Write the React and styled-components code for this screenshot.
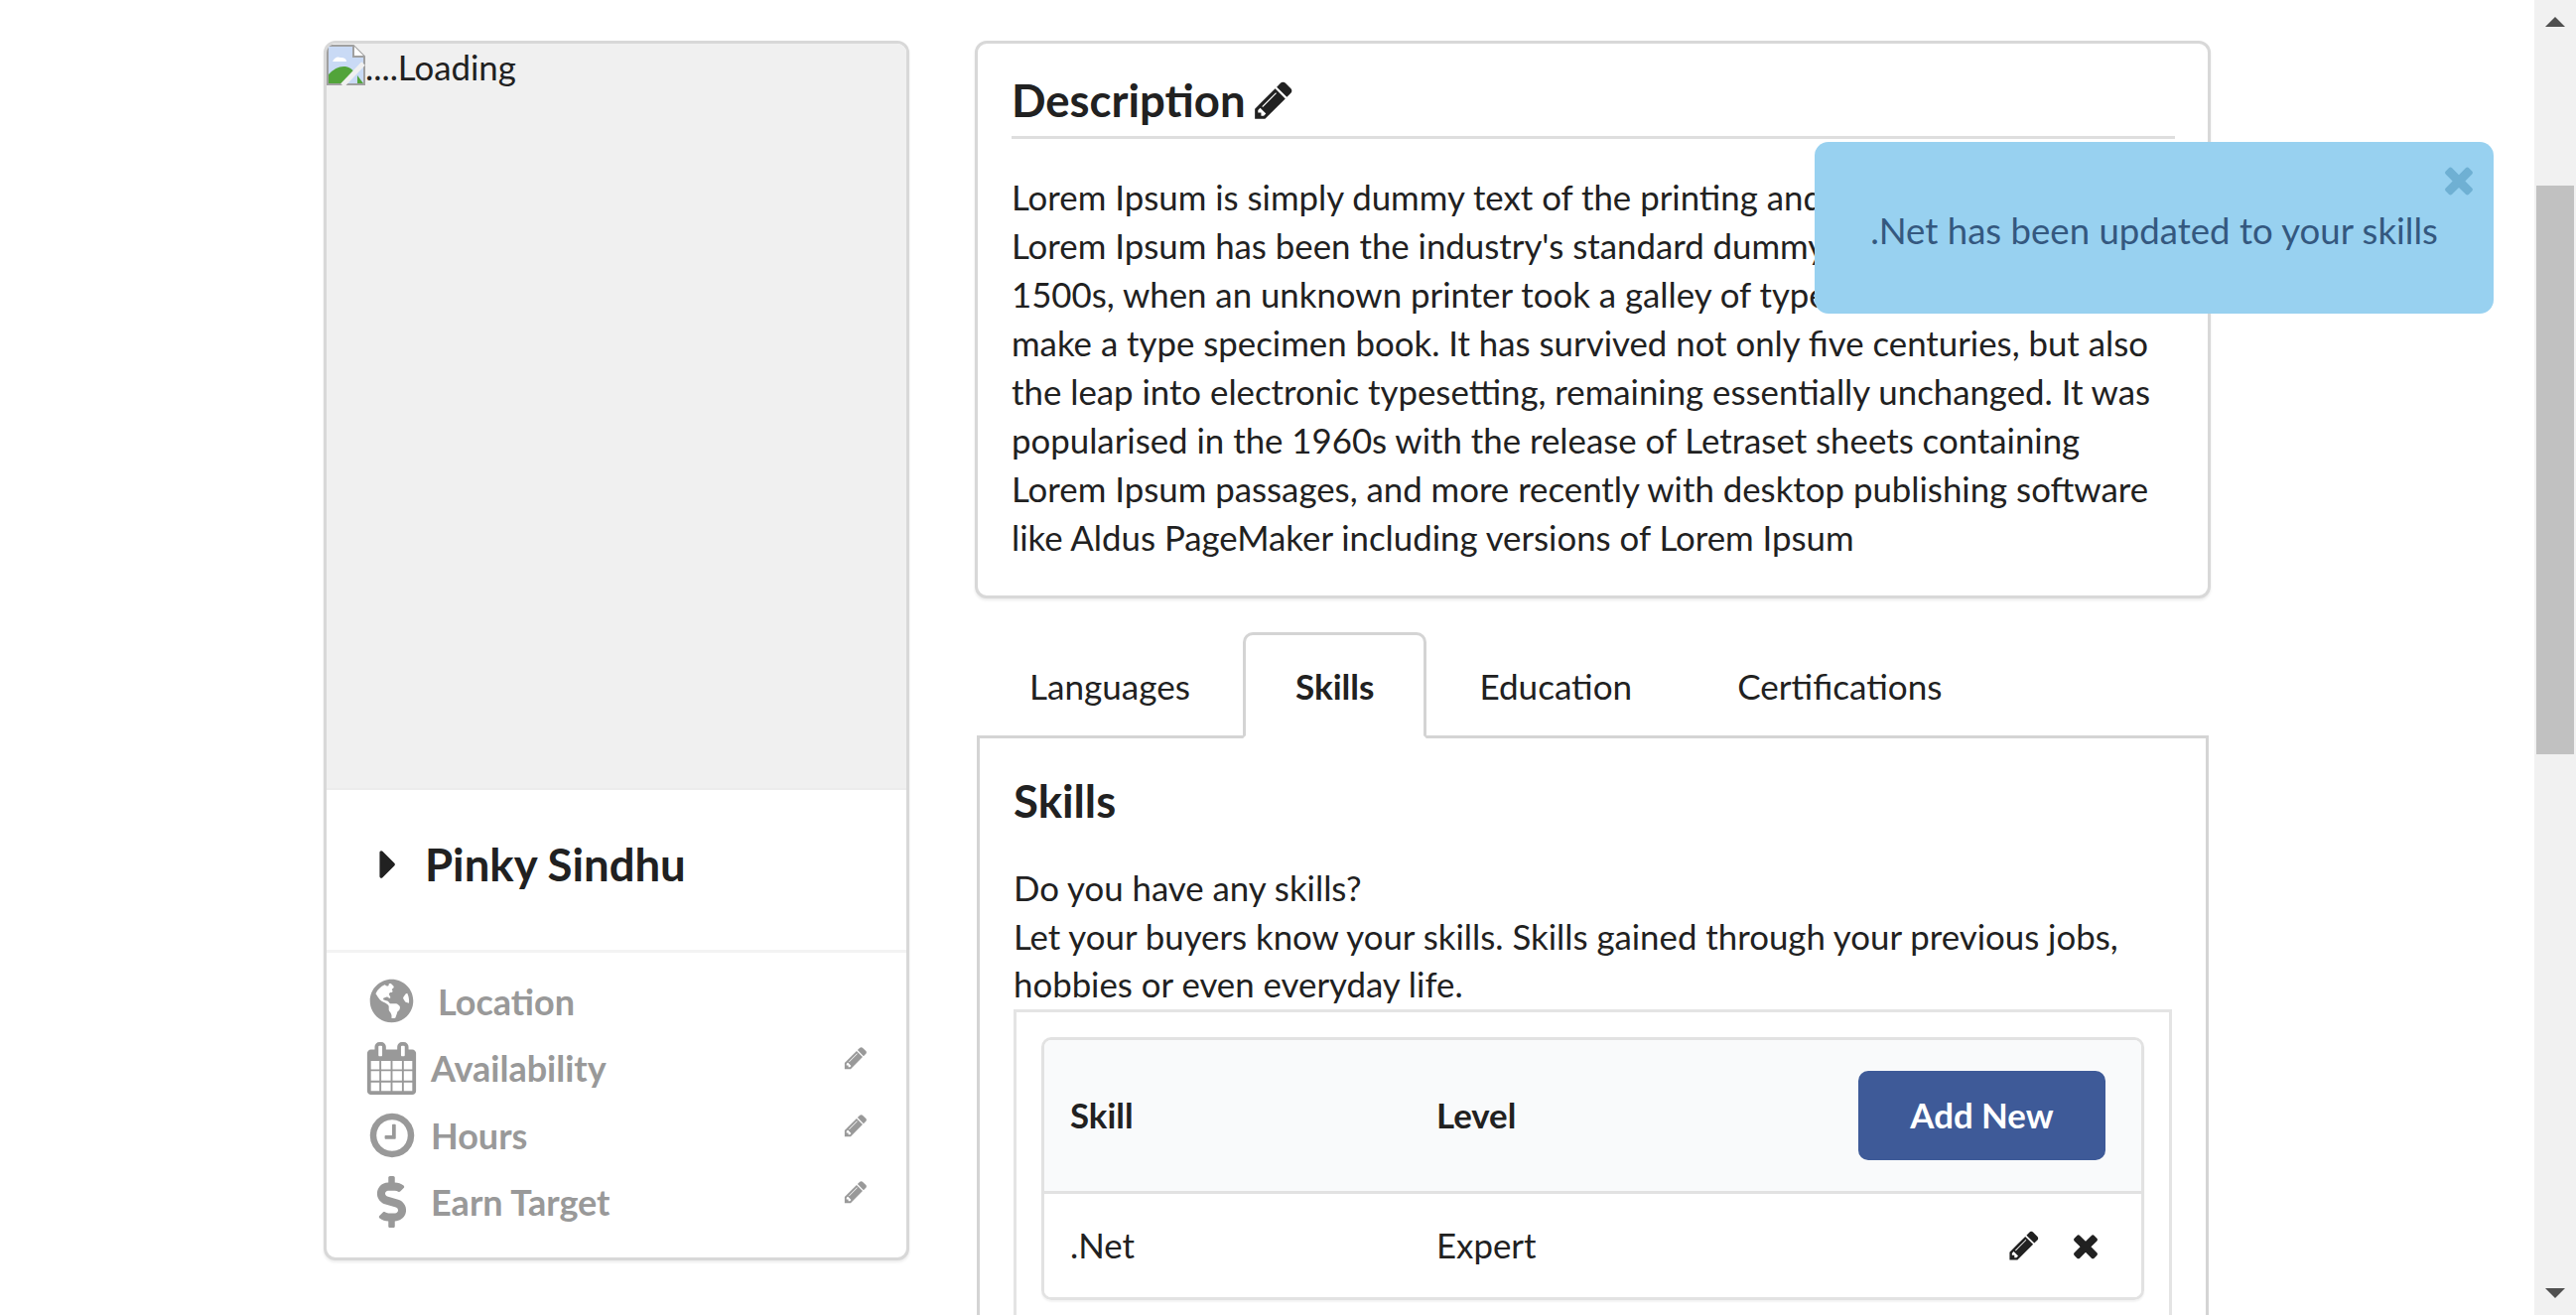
import React from 'react'
import styled, { createGlobalStyle } from 'styled-components'
import { FaGlobeAmericas, FaDollarSign } from 'react-icons/fa'

const PENCIL = 'M491 1536l91-91-235-235-91 91v107h128v128h107zm523-928q0-22-22-22-10 0-17 7l-542 542q-7 7-7 17 0 22 22 22 10 0 17-7l542-542q7-7 7-17zm-54-192l416 416-832 832h-416v-416zm683 96q0 53-37 90l-166 166-416-416 166-165q36-38 90-38 53 0 91 38l235 234q37 39 37 91z'
const TIMES = 'M1490 1322q0 40-28 68l-136 136q-28 28-68 28t-68-28l-294-294-294 294q-28 28-68 28t-68-28l-136-136q-28-28-28-68t28-68l294-294-294-294q-28-28-28-68t28-68l136-136q28-28 68-28t68 28l294 294 294-294q28-28 68-28t68 28l136 136q28 28 28 68t-28 68l-294 294 294 294q28 28 28 68z'
const CARET = 'M1152 896q0 26-19 45l-448 448q-19 19-45 19t-45-19-19-45v-896q0-26 19-45t45-19 45 19l448 448q19 19 19 45z'
const CALENDAR = 'M192 1664h288v-288h-288v288zm352 0h320v-288h-320v288zm-352-352h288v-320h-288v320zm352 0h320v-320h-320v320zm-352-384h288v-288h-288v288zm736 736h320v-288h-320v288zm-384-736h320v-288h-320v288zm768 736h288v-288h-288v288zm-384-352h320v-320h-320v320zm-352-864v-288q0-13-9.500-22.500t-22.500-9.500h-64q-13 0-22.500 9.500t-9.500 22.500v288q0 13 9.500 22.500t22.500 9.500h64q13 0 22.500-9.500t9.500-22.500zm736 864h288v-320h-288v320zm-384-384h320v-288h-320v288zm384 0h288v-288h-288v288zm32-480v-288q0-13-9.500-22.500t-22.500-9.500h-64q-13 0-22.500 9.500t-9.500 22.500v288q0 13 9.500 22.500t22.500 9.500h64q13 0 22.500-9.500t9.500-22.500zm384-64v1280q0 52-38 90t-90 38h-1408q-52 0-90-38t-38-90v-1280q0-52 38-90t90-38h128v-96q0-66 47-113t113-47h64q66 0 113 47t47 113v96h384v-96q0-66 47-113t113-47h64q66 0 113 47t47 113v96h128q52 0 90 38t38 90z'
const CLOCK = 'M1024 544v448q0 14-9 23t-23 9h-320q-14 0-23-9t-9-23v-64q0-14 9-23t23-9h224v-352q0-14 9-23t23-9h64q14 0 23 9t9 23zm416 352q0-148-73-273t-198-198-273-73-273 73-198 198-73 273 73 273 198 198 273 73 273-73 198-198 73-273zm224 0q0 209-103 385.500t-279.500 279.500-385.500 103-385.500-103-279.500-279.500-103-385.500 103-385.500 279.500-279.500 385.500-103 385.500 103 279.500 279.500 103 385.500z'

const Global = createGlobalStyle`
  html, body { margin: 0; padding: 0; height: 100%; overflow: hidden; background: #fff; }
  body { font-family: Lato, "Open Sans", sans-serif; color: #212121; font-size: 34.8px; }
  * { box-sizing: border-box; }
`

const Frame = styled.div`
  display: flex;
  height: 1325px;
  width: 2595px;
`

const Page = styled.main`
  flex: 1;
  height: 1325px;
  overflow: hidden;
  padding: 41px 326px 0 326px;
  display: grid;
  grid-template-columns: 590px 1245px;
  column-gap: 66px;
  align-items: start;
`

const ScrollTrack = styled.div`
  width: 42px;
  background: #f1f1f1;
  display: flex;
  flex-direction: column;
  align-items: center;
  padding: 17px 0;
`

const Thumb = styled.div`
  width: 38px;
  height: 573px;
  margin: 160px 0 auto;
  background: #c1c1c1;
`

const Card = styled.section`
  background: #fff;
  border: 3px solid #d8d8d8;
  border-radius: 12px;
  box-shadow: 0 2px 3px rgba(0, 0, 0, 0.08);
`

const ProfileCard = styled(Card)`
  height: 1229px;
  overflow: hidden;
`

const ImageBox = styled.div`
  height: 752px;
  background: #f0f0f0;
  display: flex;
  align-items: flex-start;
  line-height: 47px;
  border-bottom: 2px solid #ececec;
`

const NameBlock = styled.div`
  height: 164px;
  border-bottom: 3px solid #f3f3f3;
  display: flex;
  align-items: center;
  padding: 0 0 12px 38px;
  gap: 13px;
  font-size: 45.5px;
  font-weight: 700;
`

const Details = styled.ul`
  list-style: none;
  margin: 0;
  padding: 15px 38px 0 41px;
`

const DetailRow = styled.li`
  height: 67.5px;
  display: flex;
  align-items: center;
  color: #999;
  font-size: 36px;
  font-weight: 700;
`

const IconSlot = styled.span`
  width: 49px;
  display: flex;
  justify-content: center;
  margin-right: 15px;
`

const DetailLabel = styled.span`
  flex: 1;
  padding-left: ${p => p.$inset || 0}px;
`

const Glyph = styled.svg`
  display: block;
  fill: currentColor;
  flex: none;
`

const RowPencil = styled(Glyph)`
  margin-bottom: 20px;
`

const Description = styled(Card)`
  padding: 21px 33px 0 34px;
  height: 562px;
`

const CardTitle = styled.h2`
  margin: 0;
  font-size: 45.5px;
  font-weight: 700;
  line-height: 66px;
  height: 75px;
  border-bottom: 3px solid #dedede;
  display: flex;
  align-items: center;
  gap: 6px;
`

const Body = styled.p`
  margin: 0;
  line-height: 49px;
  padding-top: 34px;
`

const TabBar = styled.div`
  display: flex;
  height: 104px;
  margin: 34px 2px 0 2px;
`

const Tab = styled.div`
  height: ${p => (p.$active ? '107px' : '104px')};
  padding: 25px 50px 0;
  line-height: 52px;
  font-size: 35.1px;
  font-weight: ${p => (p.$active ? 700 : 400)};
  border: 3px solid ${p => (p.$active ? '#d4d4d4' : 'transparent')};
  border-bottom: ${p => (p.$active ? '3px solid #fff' : 'none')};
  border-radius: 10px 10px 0 0;
  background: ${p => (p.$active ? '#fff' : 'transparent')};
  position: relative;
  z-index: 1;
`

const Panel = styled.div`
  margin: 0 2px 0 2px;
  border: 3px solid #d4d4d4;
  padding: 30px 34px 80px 34px;
`

const PanelTitle = styled.h3`
  margin: 0 0 31px;
  font-size: 45.5px;
  font-weight: 700;
  line-height: 66px;
`

const PanelText = styled.p`
  margin: 0;
  line-height: 48.5px;
`

const TableBox = styled.div`
  border: 3px solid #e4e4e4;
  padding: 25px 25px 60px;
`

const SkillTable = styled.div`
  border: 3px solid #e2e2e2;
  border-radius: 10px;
  overflow: hidden;
  box-shadow: 0 2px 2px rgba(0, 0, 0, 0.05);
`

const TableRow = styled.div`
  display: grid;
  grid-template-columns: 369px 1fr auto;
  align-items: center;
  padding: 0 36px 0 26px;
  height: ${p => (p.$head ? '155px' : '104px')};
  background: ${p => (p.$head ? '#f9fafb' : '#fff')};
  border-bottom: ${p => (p.$head ? '3px solid #e2e2e2' : 'none')};
  font-weight: ${p => (p.$head ? 700 : 400)};
`

const AddButton = styled.button`
  width: 249px;
  height: 90px;
  border: none;
  border-radius: 10px;
  background: #3e5a98;
  color: #fff;
  font: 700 34.8px Lato, sans-serif;
`

const RowActions = styled.div`
  display: flex;
  align-items: center;
  gap: 27px;
  margin-right: 2px;
`

const Toast = styled.div`
  position: fixed;
  left: 1828px;
  top: 143px;
  width: 684px;
  height: 173px;
  border-radius: 14px;
  background: #98d1f0;
  color: #34587f;
  display: flex;
  align-items: center;
  justify-content: center;
  padding-top: 4px;
  font-size: 36.6px;
  z-index: 5;
`

const ToastClose = styled(Glyph)`
  position: absolute;
  top: 17px;
  right: 14px;
  color: #6fb0d3;
`

const Icon = ({ d, size }) => (
  <Glyph viewBox="0 0 1792 1792" width={size} height={size}><path d={d} /></Glyph>
)

const BrokenImage = () => (
  <svg width="39" height="41" viewBox="0 0 39 41" style={{ display: 'block', marginTop: 1, flex: 'none' }}>
    <path d="M1 1h26l11 11v28H1z" fill="#c9daf5" stroke="#a0a0a0" strokeWidth="2" />
    <path d="M27 1v11h11" fill="#fff" stroke="#a0a0a0" strokeWidth="2" />
    <path d="M6 17q3-6 8-4 6 0 6 4z" fill="#fff" />
    <path d="M2 39V30q8-9 17-8 6 1 9 6l-10 11z" fill="#52a43a" />
    <path d="M31 31l6 8h-6z" fill="#52a43a" />
    <path d="M16 41l21-22" stroke="#f0f0f0" strokeWidth="5" />
  </svg>
)

const details = [
  { label: 'Location', inset: 7, icon: <FaGlobeAmericas size={45} /> },
  { label: 'Availability', edit: true, icon: <Icon d={CALENDAR} size={53} /> },
  { label: 'Hours', edit: true, icon: <Icon d={CLOCK} size={52} /> },
  { label: 'Earn Target', edit: true, icon: <FaDollarSign size={52} /> },
]

export default function App() {
  return (
    <Frame>
      <Global />
      <Page>
        <ProfileCard>
          <ImageBox>
            <BrokenImage />
            <span>....Loading</span>
          </ImageBox>
          <NameBlock>
            <Icon d={CARET} size={48} />
            <span>Pinky Sindhu</span>
          </NameBlock>
          <Details>
            {details.map(item => (
              <DetailRow key={item.label}>
                <IconSlot>{item.icon}</IconSlot>
                <DetailLabel $inset={item.inset}>{item.label}</DetailLabel>
                {item.edit && (
                  <RowPencil viewBox="0 0 1792 1792" width="26" height="26"><path d={PENCIL} /></RowPencil>
                )}
              </DetailRow>
            ))}
          </Details>
        </ProfileCard>

        <div>
          <Description>
            <CardTitle>
              Description
              <Icon d={PENCIL} size={44} />
            </CardTitle>
            <Body>
              Lorem Ipsum is simply dummy text of the printing and typesetting industry. Lorem Ipsum has been the industry's standard dummy text ever since the 1500s, when an unknown printer took a galley of type and scrambled it to make a type specimen book. It has survived not only five centuries, but also the leap into electronic typesetting, remaining essentially unchanged. It was popularised in the 1960s with the release of Letraset sheets containing Lorem Ipsum passages, and more recently with desktop publishing software like Aldus PageMaker including versions of Lorem Ipsum
            </Body>
          </Description>

          <TabBar>
            <Tab>Languages</Tab>
            <Tab $active>Skills</Tab>
            <Tab>Education</Tab>
            <Tab>Certifications</Tab>
          </TabBar>
          <Panel>
            <PanelTitle>Skills</PanelTitle>
            <PanelText>
              Do you have any skills?<br />
              Let your buyers know your skills. Skills gained through your previous jobs, hobbies or even everyday life.
            </PanelText>
            <TableBox>
              <SkillTable>
                <TableRow $head>
                  <span>Skill</span>
                  <span>Level</span>
                  <AddButton>Add New</AddButton>
                </TableRow>
                <TableRow>
                  <span>.Net</span>
                  <span>Expert</span>
                  <RowActions>
                    <Icon d={PENCIL} size={34} />
                    <Icon d={TIMES} size={36} />
                  </RowActions>
                </TableRow>
              </SkillTable>
            </TableBox>
          </Panel>
        </div>
      </Page>

      <ScrollTrack>
        <svg width="20" height="10" viewBox="0 0 20 10"><path d="M10 0l10 10H0z" fill="#505050" /></svg>
        <Thumb />
        <svg width="20" height="10" viewBox="0 0 20 10"><path d="M10 10L0 0h20z" fill="#505050" /></svg>
      </ScrollTrack>

      <Toast>
        .Net has been updated to your skills
        <ToastClose viewBox="0 0 1792 1792" width="42" height="42"><path d={TIMES} /></ToastClose>
      </Toast>
    </Frame>
  )
}
